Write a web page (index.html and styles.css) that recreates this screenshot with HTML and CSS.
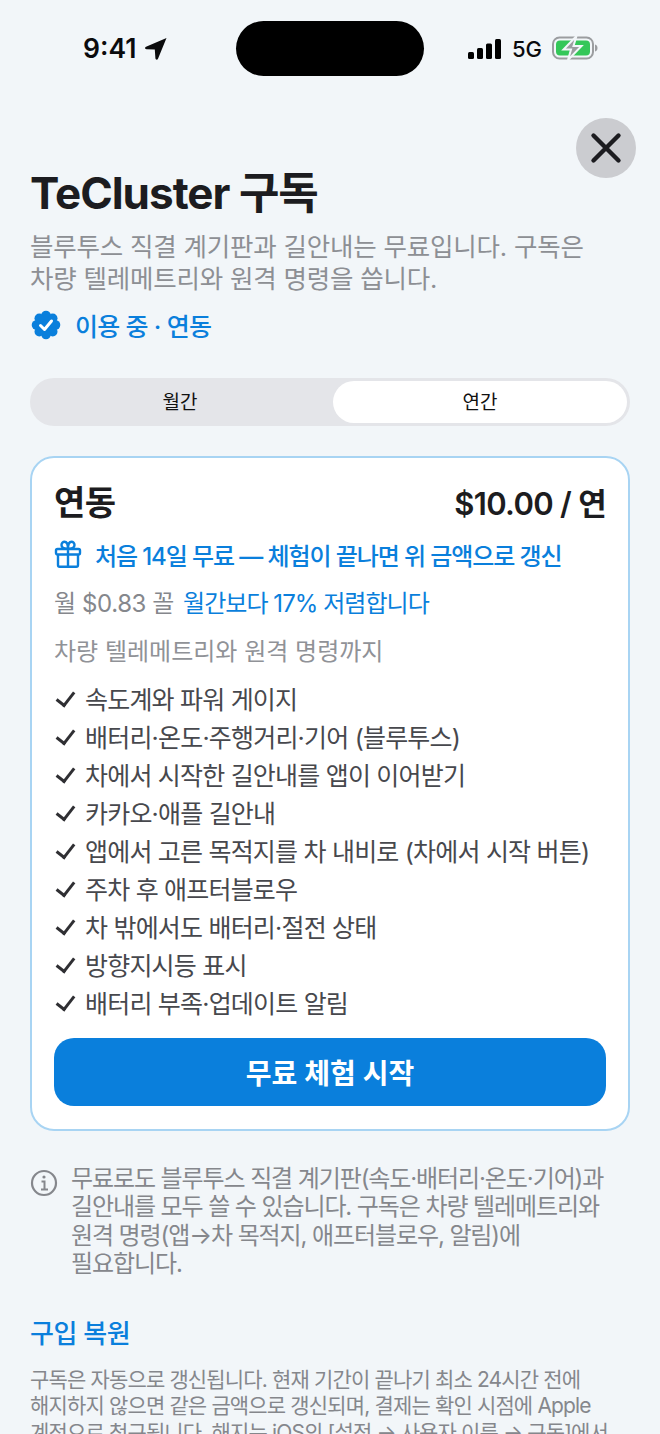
FILE: index.html
```html
<!DOCTYPE html>
<html lang="ko">
<head>
    <meta charset="UTF-8">
    <meta name="viewport" content="width=device-width, initial-scale=1.0">
    <title>TeCluster 구독</title>
    <link rel="stylesheet" href="styles.css">
</head>
<body>
    <div class="status-bar">
        <div class="status-left">
            <span class="time">9:41</span>
            <svg class="arrow" width="24" height="24" viewBox="0 0 24 24"><path d="M22.500 1 2 9.800c-1.600.7-1.200 2.300.4 2.400l8.400.2.6 8.800c.1 1.600 1.900 2 2.600.5L22.500 1Z" fill="#0b0b0d"/></svg>
        </div>
        <div class="island"></div>
        <div class="status-right">
            <svg width="34" height="22" viewBox="0 0 34 22"><rect x="0" y="14" width="6" height="7" rx="1.500"/><rect x="9" y="10" width="6" height="11" rx="1.500"/><rect x="18" y="5.500" width="6" height="15.500" rx="1.500"/><rect x="27" y="1" width="6" height="20" rx="1.500"/></svg>
            <span class="network">5G</span>
            <svg class="battery" width="46" height="24" viewBox="0 0 46 24"><rect x="1" y="1.500" width="40" height="21" rx="6.500" fill="none" stroke="#9b9da0" stroke-width="2"/><rect x="4" y="4.500" width="34" height="15" rx="4" fill="#34c759"/><path d="M43 8.500c1.700.5 2.500 1.800 2.500 3.500s-.8 3-2.500 3.500Z" fill="#9b9da0"/><path d="M24.500 0 11.500 13.500h7.500L16 24l13.500-14h-8Z" fill="#9b9da0" stroke="#f2f6f9" stroke-width="2"/></svg>
        </div>
    </div>

    <main class="content">
        <button class="close-btn" aria-label="닫기">
            <svg width="32" height="32" viewBox="0 0 32 32"><path d="M3.500 3.500l25 25M28.500 3.500l-25 25" stroke="#1c1c20" stroke-width="4.400" stroke-linecap="round"/></svg>
        </button>

        <h1 class="title">TeCluster 구독</h1>
        <p class="subtitle">블루투스 직결 계기판과 길안내는 무료입니다. 구독은 차량 텔레메트리와 원격 명령을 씁니다.</p>

        <div class="status-badge">
            <svg width="32" height="32" viewBox="0 0 32 32">
                <g fill="#0a7fdc">
                    <circle cx="16" cy="16" r="11"/>
                    <circle cx="16" cy="6.500" r="4.800"/>
                    <circle cx="22.700" cy="9.300" r="4.800"/>
                    <circle cx="25.500" cy="16" r="4.800"/>
                    <circle cx="22.700" cy="22.700" r="4.800"/>
                    <circle cx="16" cy="25.500" r="4.800"/>
                    <circle cx="9.300" cy="22.700" r="4.800"/>
                    <circle cx="6.500" cy="16" r="4.800"/>
                    <circle cx="9.300" cy="9.300" r="4.800"/>
                </g>
                <path d="M10.500 16.500l4 4 7-8.500" fill="none" stroke="#fff" stroke-width="3" stroke-linecap="round" stroke-linejoin="round"/>
            </svg>
            <span>이용 중 · 연동</span>
        </div>

        <div class="segment">
            <div class="segment-item">월간</div>
            <div class="segment-item active">연간</div>
        </div>

        <section class="card">
            <div class="card-head">
                <h2 class="plan-name">연동</h2>
                <div class="plan-price">$10.00 / 연</div>
            </div>
            <div class="trial">
                <svg width="28" height="28" viewBox="0 0 28 28" fill="none" stroke="#0a7fdc" stroke-width="2.400" stroke-linejoin="round"><rect x="2" y="9" width="24" height="5.500" rx="1.500"/><path d="M4 14.500V25c0 1 .7 1.700 1.700 1.700h16.600c1 0 1.700-.7 1.700-1.700V14.500M14 9v17.700M14 9C11 9 7.500 8 7.500 5 7.500 3 9 1.800 10.500 1.800 13 1.800 14 5 14 9ZM14 9c3 0 6.500-1 6.500-4 0-2-1.500-3.200-3-3.200C15 1.800 14 5 14 9Z"/></svg>
                <span>처음 14일 무료 — 체험이 끝나면 위 금액으로 갱신</span>
            </div>
            <div class="monthly">
                <span class="muted">월 $0.83 꼴</span>
                <span class="save">월간보다 17% 저렴합니다</span>
            </div>
            <p class="plan-desc">차량 텔레메트리와 원격 명령까지</p>
            <ul class="features">
                <li>속도계와 파워 게이지</li>
                <li>배터리·온도·주행거리·기어 (블루투스)</li>
                <li>차에서 시작한 길안내를 앱이 이어받기</li>
                <li>카카오·애플 길안내</li>
                <li>앱에서 고른 목적지를 차 내비로 (차에서 시작 버튼)</li>
                <li>주차 후 애프터블로우</li>
                <li>차 밖에서도 배터리·절전 상태</li>
                <li>방향지시등 표시</li>
                <li>배터리 부족·업데이트 알림</li>
            </ul>
            <button class="cta">무료 체험 시작</button>
        </section>

        <div class="info">
            <svg width="28" height="28" viewBox="0 0 28 28" fill="none" stroke="#85878c" stroke-width="2.200"><circle cx="14" cy="14" r="12"/><path d="M11.500 12.500H14.500V20M11 20.500h7" stroke-width="2"/><circle cx="14" cy="8" r="1.600" fill="#85878c" stroke="none"/></svg>
            <p>무료로도 블루투스 직결 계기판(속도·배터리·온도·기어)과 길안내를 모두 쓸 수 있습니다. 구독은 차량 텔레메트리와 원격 명령(앱→차 목적지, 애프터블로우, 알림)에 필요합니다.</p>
        </div>

        <a class="restore">구입 복원</a>

        <p class="legal">구독은 자동으로 갱신됩니다. 현재 기간이 끝나기 최소 24시간 전에 해지하지 않으면 같은 금액으로 갱신되며, 결제는 확인 시점에 Apple 계정으로 청구됩니다. 해지는 iOS의 [설정 → 사용자 이름 → 구독]에서 할 수 있습니다.</p>
    </main>
</body>
</html>
```

FILE: styles.css
```css
* {
    box-sizing: border-box;
}
html, body {
    height: 1434px;
    overflow: hidden;
}
body {
    margin: 0;
    padding-top: 21px;
    background-color: #f2f6f9;
    color: #1c1c20;
    font-family: Inter, "Noto Sans CJK KR", sans-serif;
    word-break: keep-all;
}
.status-bar {
    display: flex;
    align-items: center;
    height: 55px;
    padding: 0 62px 0 83px;
}
.status-left, .status-right {
    display: flex;
    align-items: center;
}
.status-left {
    width: 153px;
    gap: 8px;
}
.time {
    margin-top: -2px;
    font-size: 26.500px;
    font-weight: 600;
    color: #0b0b0d;
}
.island {
    width: 188px;
    height: 55px;
    border-radius: 28px;
    background-color: #000;
}
.status-right {
    gap: 10px;
    margin-left: auto;
}
.network {
    font-size: 22px;
    font-weight: 500;
    color: #0b0b0d;
}
.battery {
    margin-top: -2px;
}
.content {
    position: relative;
    padding: 87px 30px 0;
}
.close-btn {
    position: absolute;
    top: 42px;
    right: 24px;
    display: flex;
    align-items: center;
    justify-content: center;
    width: 60px;
    height: 60px;
    padding: 0;
    border: none;
    border-radius: 50%;
    background-color: #cbccd0;
}
.title {
    margin: 0;
    font-size: 44px;
    line-height: 60px;
    font-weight: 700;
    letter-spacing: -1px;
}
.subtitle {
    margin: 8px 0 0;
    font-size: 25.500px;
    line-height: 32px;
    color: #8d8f94;
    letter-spacing: -0.2px;
}
.status-badge {
    display: flex;
    align-items: center;
    gap: 13px;
    margin: 13px 0 0;
    height: 34px;
    font-size: 25px;
    font-weight: 500;
    color: #0a7fdc;
    letter-spacing: -0.7px;
}
.segment {
    display: flex;
    height: 48px;
    margin-top: 36px;
    padding: 3px 3px 3px 0;
    border-radius: 24px;
    background-color: #e4e5e9;
}
.segment-item {
    display: flex;
    align-items: center;
    justify-content: center;
    width: 300px;
    padding-bottom: 3px;
    border-radius: 21px;
    font-size: 19px;
    color: #111;
}
.segment-item.active {
    width: 294px;
    margin-left: 3px;
    background-color: #fff;
}
.card {
    margin-top: 30px;
    height: 675px;
    padding: 13px 22px 24px;
    border: 2px solid #a8d4f3;
    border-radius: 24px;
    background-color: #fff;
}
.card-head {
    display: flex;
    align-items: center;
    justify-content: space-between;
    height: 54px;
}
.plan-name {
    margin: 4px 0 0;
    font-size: 34px;
    font-weight: 700;
    letter-spacing: -0.5px;
}
.plan-price {
    margin-top: 6px;
    font-size: 31px;
    font-weight: 600;
    letter-spacing: -0.7px;
}
.trial {
    display: flex;
    align-items: center;
    gap: 13px;
    margin-top: 11px;
    height: 36px;
    font-size: 24px;
    font-weight: 500;
    color: #0a7fdc;
    letter-spacing: -1.1px;
}
.monthly {
    display: flex;
    gap: 9px;
    align-items: center;
    margin-top: 11px;
    height: 36px;
    font-size: 24px;
}
.muted {
    color: #85878c;
    letter-spacing: -0.4px;
}
.save {
    color: #0a7fdc;
    font-weight: 400;
    letter-spacing: -0.95px;
}
.plan-desc {
    margin: 12px 0 0;
    padding-top: 3px;
    height: 39px;
    line-height: 36px;
    font-size: 24px;
    color: #909297;
}
.features {
    margin: 9px 0 0;
    padding: 0;
    list-style: none;
}
.features li {
    display: flex;
    align-items: center;
    gap: 12px;
    height: 38px;
    font-size: 25px;
    color: #47484d;
    letter-spacing: -0.8px;
    white-space: nowrap;
}
.features li::before {
    content: "";
    flex: none;
    width: 8px;
    height: 15px;
    margin: -3px 2px 0 6px;
    border-right: 3px solid #2f2f33;
    border-bottom: 3px solid #2f2f33;
    transform: rotate(38deg);
}
.cta {
    display: block;
    width: 100%;
    height: 68px;
    margin-top: 17px;
    border: none;
    border-radius: 20px;
    background-color: #0a7fdc;
    color: #fff;
    font-family: inherit;
    font-size: 28px;
    font-weight: 600;
}
.info {
    display: flex;
    gap: 13px;
    margin-top: 34px;
    color: #85878c;
}
.info svg {
    flex: none;
    margin-top: 4px;
}
.info p {
    margin: 0;
    font-size: 24px;
    line-height: 28.400px;
    letter-spacing: -1.1px;
}
.restore {
    display: block;
    margin-top: 34px;
    font-size: 26px;
    font-weight: 500;
    color: #0a7fdc;
    letter-spacing: -0.5px;
}
.legal {
    margin: 17px 0 0;
    font-size: 21px;
    line-height: 26.500px;
    color: #85878c;
    letter-spacing: -0.85px;
}
```
